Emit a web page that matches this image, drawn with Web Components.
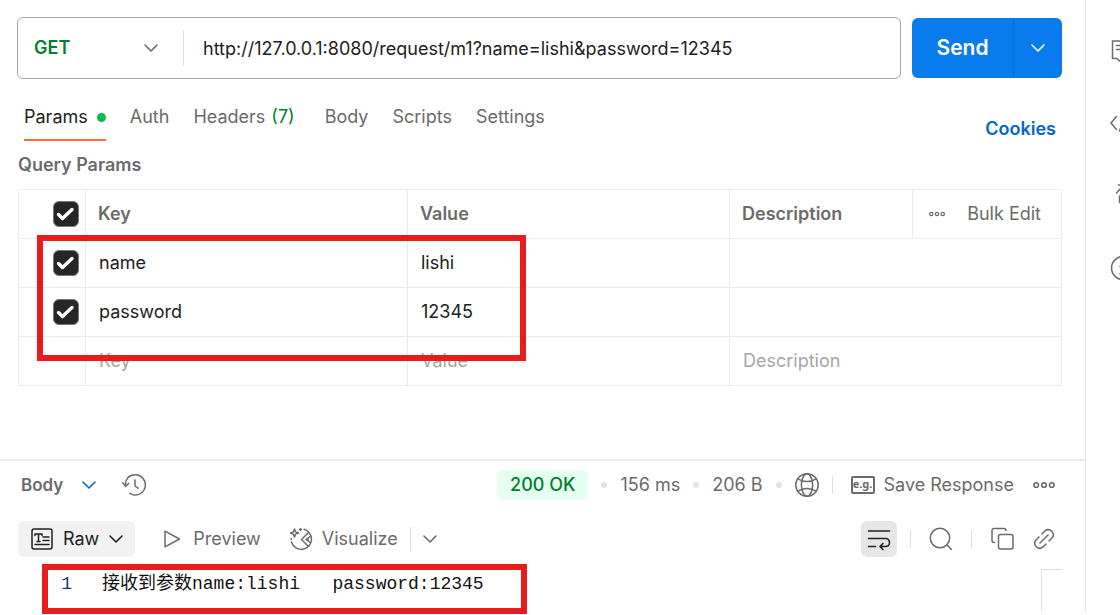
<!DOCTYPE html>
<html lang="en">
<head>
<meta charset="utf-8">
<title>Request</title>
<style>
html { height: 100%; }
body { margin: 0; min-height: 100%; background: #fff; color: #212121; font: 18px/24px Inter, "Noto Sans CJK SC", sans-serif; overflow: hidden; }
</style>
</head>
<body>
<api-client></api-client>
<script>
const ICONS = {
  chevron: [14, 14, '<path d="M1 4l6 6 6-6" stroke-width="1.6"/>'],
  dots: [22, 8, '<g stroke-width="1.6"><circle cx="3.2" cy="4" r="2.3"/><circle cx="11" cy="4" r="2.3"/><circle cx="18.8" cy="4" r="2.3"/></g>'],
  smalldots: [16, 8, '<g stroke-width="1.2"><circle cx="2.3" cy="4" r="1.7"/><circle cx="8" cy="4" r="1.7"/><circle cx="13.7" cy="4" r="1.7"/></g>'],
  check: [26, 26, '<path d="M5.500 13.500l4 4 9.500-9" stroke-width="3.4"/>'],
  history: [24, 24, '<path d="M3.5 12.5C2.8 6.300 7.500 1.800 13 1.800a10.100 10.100 0 1 1-5.200 18.600"/><path d="M.8 9.800l2.800 3.600 3.200-3.200M13 7v6l3 2.200"/>'],
  globe: [24, 24, '<circle cx="12" cy="12" r="11.200"/><ellipse cx="12" cy="12" rx="5.600" ry="11.200"/><path d="M3 5.800c5 3.600 13 3.600 18 0M3 18.200c5-3.600 13-3.600 18 0"/>'],
  text: [22, 22, '<rect x="1" y="1" width="20" height="20" rx="2"/><path d="M4 7.500V6h7v1.500M7.500 6v7.500M6 13.500h3M12 9h6M12 12.500h6M4 16.500h14"/>'],
  play: [18, 18, '<path d="M2 1.200v15.600L16.500 9z"/>'],
  visualize: [24, 24, '<path d="M5.500 2l1.100 2.900L9.500 6l-2.900 1.100L5.500 10 4.400 7.100 1.500 6l2.900-1.100z"/><path d="M10.500 2.500h2M11.500 1.500v2M15 2.300a10.300 10.300 0 0 1 7.500 10.200 10.200 10.200 0 0 1-20 2.500M2.200 11.500v1M19.500 5.500L12.500 12.500l7 7M21 9.500l-4 3 4 3M19 11v3"/>'],
  wrap: [24, 24, '<path d="M1.500 4h21M1.500 11.500h17a4 4 0 0 1 0 8h-5M1.500 19.500h7M16 16.500l-3 3 3 3" stroke-width="1.6"/>'],
  search: [24, 24, '<circle cx="11" cy="11" r="9.700"/><path d="M18 18l4.500 4.500"/>'],
  copy: [23, 24, '<path d="M3.500 15.500H3a2 2 0 0 1-2-2V3.500a2 2 0 0 1 2-2h10a2 2 0 0 1 2 2"/><rect x="7.500" y="7.500" width="14.500" height="14.500" rx="2"/>'],
  link: [22, 22, '<path d="M9 6l3.200-3.200a5 5 0 0 1 7 7L16 13M13 16l-3.200 3.200a5 5 0 0 1-7-7L6 9M7 15l8-8"/>'],
  comment: [24, 24, '<path d="M2.500 2h20v17.500h-10L9.500 22l-2.500-2.500H2.500zM6.500 6.500h12M6.500 10.500h12"/>'],
  code: [26, 24, '<path d="M6.500 5.500L1 12l5.500 6.500M9.500 20l6-16M19 5.500l6 6.500-6 6.500"/>'],
  tool: [24, 24, '<path d="M6.500 10l5-5.500 5 5.500M8.500 2h12M9.500 13v6.500"/>'],
  info: [26, 26, '<circle cx="13" cy="13" r="11.500"/><path d="M10 11.500h4v7.500M10 19h7M13 7v1"/>']
};

function define(name, html, setup) {
  const template = document.createElement('template');
  template.innerHTML = html;
  customElements.define(name, class extends HTMLElement {
    constructor() {
      super();
      this.attachShadow({ mode: 'open' }).append(template.content.cloneNode(true));
    }
    connectedCallback() { if (setup) setup(this, this.shadowRoot); }
  });
}

define('ui-icon', `<style>:host{display:inline-flex;flex:none}svg{display:block;fill:none;stroke:currentColor;stroke-width:1.5;stroke-linecap:round;stroke-linejoin:round}</style><span></span>`, (el, root) => {
  const [w, h, shape] = ICONS[el.getAttribute('name')];
  root.querySelector('span').innerHTML = `<svg width="${w}" height="${h}" viewBox="0 0 ${w} ${h}" aria-hidden="true">${shape}</svg>`;
});

define('ui-divider', `<style>:host{display:block;flex:none;width:1px;height:18px;background:#dedede}</style>`);
define('ui-dot', `<style>:host{display:block;flex:none;width:6px;height:6px;border-radius:50%;background:#e3e3e3}</style>`);

/* Red highlight drawn over the content by the person annotating the page */
define('highlight-frame', `<style>:host{display:block;position:absolute;box-sizing:border-box;border:6px solid #e81c1c;pointer-events:none}</style>`);

define('ui-check', `<style>
:host{display:block;width:26px;height:26px}
label{display:grid;color:#fff}
input,ui-icon{grid-area:1/1}
input{appearance:none;margin:0;width:26px;height:26px;border-radius:6px;background:#262626;border:1px solid #777}
ui-icon{pointer-events:none}
</style><label><input type="checkbox" checked><ui-icon name="check"></ui-icon></label>`, (el, root) => {
  root.querySelector('input').setAttribute('aria-label', el.getAttribute('label'));
});

define('request-bar', `<style>
:host{display:flex;align-items:center;gap:11px}
.field{flex:1;display:flex;align-items:center;height:60px;border:1px solid #a6a6a6;border-radius:6px;min-width:0}
.method{display:grid;align-items:center;width:165px;flex:none}
select,.method ui-icon{grid-area:1/1}
select{appearance:none;border:0;background:none;margin:0;padding:0 0 0 16px;height:36px;font:600 18px/24px Inter,sans-serif;color:#007f31}
.method ui-icon{justify-self:end;margin-right:25px;color:#6b6b6b;pointer-events:none}
ui-divider{height:36px}
input{flex:1;min-width:0;border:0;padding:0 19px;height:36px;font:inherit;color:#212121;background:none}
.send{display:flex;height:60px;border-radius:6px;overflow:hidden}
button{border:0;margin:0;padding:0;background:#097bed;color:#fff;display:grid;place-items:center}
.main{width:101px;font:600 21px/28px Inter,sans-serif}
.more{width:49px;border-left:1px solid #0569cf}
</style>
<div class="field"><div class="method"><select aria-label="Method"><option>GET</option><option>POST</option></select><ui-icon name="chevron"></ui-icon></div><ui-divider></ui-divider>
<input type="text" aria-label="URL" value="http://127.0.0.1:8080/request/m1?name=lishi&amp;password=12345"></div>
<div class="send"><button class="main">Send</button><button class="more" aria-label="Send options"><ui-icon name="chevron"></ui-icon></button></div>`);

define('request-tabs', `<style>
:host{display:flex;align-items:flex-end;justify-content:space-between;height:62px;padding:0 6px 0 7px}
nav{display:flex;gap:24px}
button{display:flex;align-items:center;gap:9px;height:48px;box-sizing:border-box;border:0;border-bottom:2px solid transparent;background:none;padding:2px 0 0;font:inherit;color:#6b6b6b;white-space:pre}
.on{color:#212121;border-color:#ff6c37}
.on i{width:9px;height:9px;border-radius:50%;background:#0cbb52}
.headers{gap:6px;padding-right:6px}
.headers span{color:#007f31}
a{font-weight:600;color:#0265d2;text-decoration:none}
</style>
<nav><button class="on">Params<i></i></button><button>Auth</button><button class="headers">Headers<span>(7)</span></button><button>Body</button><button>Scripts</button><button>Settings</button></nav>
<a href="#cookies">Cookies</a>`);

define('params-table', `<style>
:host{display:block;position:relative;padding-left:1px}
h2{margin:0;font:600 18px/48px Inter,sans-serif;color:#6b6b6b}
table{width:100%;table-layout:fixed;border-collapse:collapse}
th,td{height:48px;padding:0;border:1px solid #ebebeb;text-align:left}
th{font-weight:600;color:#6b6b6b;padding-left:12px}
tr>:first-child{padding:0 6px 0 0}
ui-check{margin-left:auto}
input{box-sizing:border-box;display:block;width:100%;border:0;background:none;padding:0 13px;font:inherit;color:#212121}
input::placeholder{color:#a6a6a6;opacity:1}
.c0{width:67px}.c3{width:183px}.c4{width:149px}
.tools{display:flex;align-items:center;justify-content:space-between;padding-right:20px;margin-left:4px;color:#6b6b6b}
button{border:0;background:none;padding:0;font:inherit;font-weight:400;color:inherit;display:flex}
highlight-frame{left:20px;top:94px;width:489px;height:126px}
</style>
<h2>Query Params</h2>
<table><colgroup><col class="c0"><col><col><col class="c3"><col class="c4"></colgroup>
<thead><tr><th><ui-check label="Select all"></ui-check></th><th>Key</th><th>Value</th><th>Description</th><th><div class="tools"><button aria-label="Columns"><ui-icon name="smalldots"></ui-icon></button><button>Bulk Edit</button></div></th></tr></thead>
<tbody>
<tr><td><ui-check label="Use name"></ui-check></td><td><input type="text" aria-label="Key" value="name"></td><td><input type="text" aria-label="Value" value="lishi"></td><td colspan="2"><input type="text" aria-label="Description"></td></tr>
<tr><td><ui-check label="Use password"></ui-check></td><td><input type="text" aria-label="Key" value="password"></td><td><input type="text" aria-label="Value" value="12345"></td><td colspan="2"><input type="text" aria-label="Description"></td></tr>
<tr><td></td><td><input type="text" aria-label="New key" placeholder="Key"></td><td><input type="text" aria-label="New value" placeholder="Value"></td><td colspan="2"><input type="text" aria-label="New description" placeholder="Description"></td></tr>
</tbody></table>
<highlight-frame></highlight-frame>`);

define('response-panel', `<style>
:host{display:flex;flex-direction:column;flex:1;border-top:2px solid #ebebeb;color:#6b6b6b}
.row{display:flex;align-items:center;justify-content:space-between}
.status{height:48px;padding:0 30px 0 21px}
.views{height:60px;padding:0 30px 0 18px}
.group{display:flex;align-items:center}
button{display:flex;align-items:center;border:0;background:none;padding:0;margin:0;font:inherit;color:inherit}
.body{gap:19px;font-weight:600;font-size:17px}
.body ui-icon{color:#0265d2}
.status .left{gap:26px}
.status .right{gap:13px}
.ok{padding:3px 13px;border-radius:6px;background:#e5fff1;color:#007f31;font-weight:500}
.save{gap:9px;margin:0 6px 0 5px}
.eg{box-sizing:border-box;width:24px;height:18px;border:2px solid #6b6b6b;border-radius:2px;font:700 11px/12px "Noto Sans",sans-serif;text-align:center}
.raw{height:36px;padding:0 12px 0 13px;border-radius:6px;background:#f2f2f2;color:#212121;gap:10px}
.views .left{gap:28px}
.play{gap:12px}
.vis{gap:9px}
.pair{display:flex;align-items:center;gap:12px}
.pair ui-divider{height:24px}
.views .right{gap:13px}
.wrap{height:36px;padding:0 6px;border-radius:6px;background:#e6e6e6;color:#212121}
.find{margin:0 5px}
.copy{margin:0 6px}
.code{position:relative;flex:1;display:grid;grid-template-columns:72px 1fr 21px;column-gap:30px;padding-right:23px;font:18px/30px "Liberation Mono","Noto Sans CJK SC",monospace;color:#111}
.num{text-align:right;color:#237}
pre{margin:0;font:inherit}
.ruler{border:1px solid #dedede;border-right:0;border-bottom:0}
highlight-frame{left:42px;top:-5px;width:485px;height:50px}
</style>
<div class="row status"><div class="group left"><button class="body">Body<ui-icon name="chevron"></ui-icon></button><button aria-label="History"><ui-icon name="history"></ui-icon></button></div>
<div class="group right"><span class="ok">200 OK</span><ui-dot></ui-dot><span>156 ms</span><ui-dot></ui-dot><span>206 B</span><ui-dot></ui-dot><button aria-label="Network"><ui-icon name="globe"></ui-icon></button><ui-divider></ui-divider><button class="save"><span class="eg">e.g.</span>Save Response</button><button aria-label="More"><ui-icon name="dots"></ui-icon></button></div></div>
<div class="row views"><div class="group left"><button class="raw"><ui-icon name="text"></ui-icon>Raw<ui-icon name="chevron"></ui-icon></button><button class="play"><ui-icon name="play"></ui-icon>Preview</button><div class="pair"><button class="vis"><ui-icon name="visualize"></ui-icon>Visualize</button><ui-divider></ui-divider><button aria-label="Views"><ui-icon name="chevron"></ui-icon></button></div></div>
<div class="group right"><button class="wrap" aria-label="Wrap lines"><ui-icon name="wrap"></ui-icon></button><ui-divider></ui-divider><button class="find" aria-label="Search"><ui-icon name="search"></ui-icon></button><ui-divider></ui-divider><button class="copy" aria-label="Copy"><ui-icon name="copy"></ui-icon></button><button aria-label="Link"><ui-icon name="link"></ui-icon></button></div></div>
<div class="code"><span class="num">1</span><pre>接收到参数name:lishi   password:12345</pre><div class="ruler"></div><highlight-frame></highlight-frame></div>`);

define('side-rail', `<style>
:host{display:flex;flex-direction:column;align-items:flex-start;gap:48px;box-sizing:border-box;width:35px;flex:none;border-left:1px solid #e6e6e6;padding:39px 0 0 24px;overflow:hidden;color:#6b6b6b}
button{display:flex;border:0;background:none;padding:0;color:inherit}
</style>
<button aria-label="Comments"><ui-icon name="comment"></ui-icon></button><button aria-label="Code"><ui-icon name="code"></ui-icon></button><button aria-label="Tools"><ui-icon name="tool"></ui-icon></button><button aria-label="Info"><ui-icon name="info"></ui-icon></button>`);

define('api-client', `<style>
:host{display:flex;min-height:100vh;box-sizing:border-box;padding-bottom:4px}
main{flex:1;min-width:0;display:flex;flex-direction:column}
.request{padding:17px 23px 73px 17px}
</style>
<main><div class="request"><request-bar></request-bar><request-tabs></request-tabs><params-table></params-table></div><response-panel></response-panel></main><side-rail></side-rail>`);
</script>
</body>
</html>
